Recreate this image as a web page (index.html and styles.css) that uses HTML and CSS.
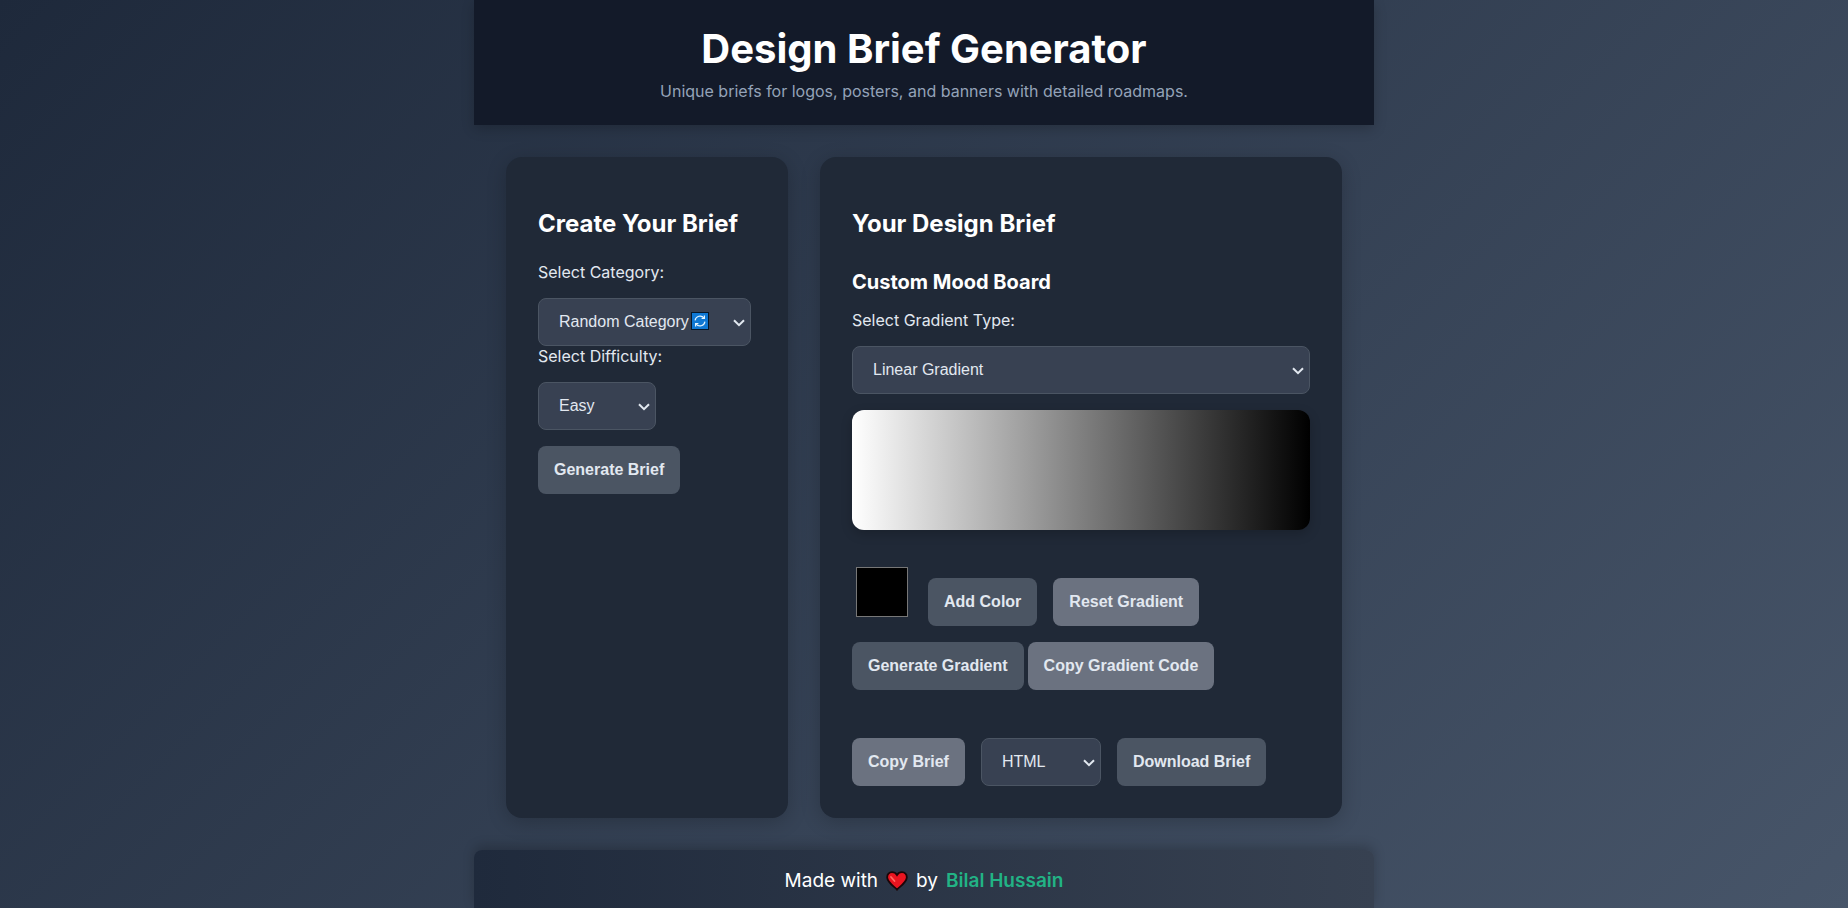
FILE: index.html
```html
<!DOCTYPE html>
<html lang="en">
<head>
<meta charset="utf-8">
<meta name="viewport" content="width=device-width, initial-scale=1">
<title>Design Brief Generator</title>
<link rel="stylesheet" href="styles.css">
</head>
<body>
<div class="container">
  <header class="header">
    <h1>Design Brief Generator</h1>
    <p>Unique briefs for logos, posters, and banners with detailed roadmaps.</p>
  </header>
  <main class="main">
    <section class="card">
      <h2>Create Your Brief</h2>
      <label for="category">Select Category:</label>
      <div class="select-wrap category">
        <select id="category" class="select"><option>Random Category</option></select>
        <svg class="refresh" viewBox="0 0 18 18" aria-hidden="true">
          <rect x="0.5" y="0.5" width="17" height="17" fill="#0f78d4" stroke="#06182a"/>
          <g fill="none" stroke="#e6f6ff" stroke-width="1.2">
            <path d="M4.1 8.4A5 5 0 0 1 13 6M13.9 9.6A5 5 0 0 1 5 12"/>
            <path d="M13.4 3.6V6.4H10.6M4.6 14.4V11.6H7.4"/>
          </g>
        </svg>
        <svg class="chevron" viewBox="0 0 12 8" aria-hidden="true"><path d="M1 1.2L6 6.2L11 1.2"/></svg>
      </div>
      <label for="difficulty">Select Difficulty:</label>
      <div class="select-wrap difficulty">
        <select id="difficulty" class="select"><option>Easy</option><option>Medium</option><option>Hard</option></select>
        <svg class="chevron" viewBox="0 0 12 8" aria-hidden="true"><path d="M1 1.2L6 6.2L11 1.2"/></svg>
      </div>
      <button type="button" class="btn">Generate Brief</button>
    </section>
    <section class="card">
      <h2>Your Design Brief</h2>
      <h3>Custom Mood Board</h3>
      <label for="gradient-type">Select Gradient Type:</label>
      <div class="select-wrap wide">
        <select id="gradient-type" class="select"><option>Linear Gradient</option><option>Radial Gradient</option></select>
        <svg class="chevron" viewBox="0 0 12 8" aria-hidden="true"><path d="M1 1.2L6 6.2L11 1.2"/></svg>
      </div>
      <div class="preview"></div>
      <div class="row colors">
        <input type="color" class="swatch" value="#000000" aria-label="Gradient color">
        <button type="button" class="btn">Add Color</button>
        <button type="button" class="btn light">Reset Gradient</button>
      </div>
      <div class="row tight">
        <button type="button" class="btn">Generate Gradient</button>
        <button type="button" class="btn light">Copy Gradient Code</button>
      </div>
      <div class="row actions">
        <button type="button" class="btn light">Copy Brief</button>
        <div class="select-wrap format">
          <select class="select" aria-label="Download format"><option>HTML</option><option>PDF</option></select>
          <svg class="chevron" viewBox="0 0 12 8" aria-hidden="true"><path d="M1 1.2L6 6.2L11 1.2"/></svg>
        </div>
        <button type="button" class="btn">Download Brief</button>
      </div>
    </section>
  </main>
  <footer class="footer">
    <span>Made with</span>
    <svg class="heart" viewBox="0 0 22 20" role="img" aria-label="love">
      <path d="M11 18.6C9 16 1.5 11.8 1.2 6.6C1 3.2 3.3 1.2 6 1.2C8.4 1.2 10 2.4 11 4C12 2.4 13.6 1.2 16 1.2C18.7 1.2 21 3.2 20.8 6.6C20.5 11.8 13 16 11 18.6Z" fill="#ea1420" stroke="#1b0508" stroke-width="1.8"/>
      <path d="M5 6L8.5 10" stroke="#ff6a62" stroke-width="1.8" stroke-linecap="round"/>
    </svg>
    <span>by</span>
    <a href="#">Bilal Hussain</a>
  </footer>
</div>
</body>
</html>
```
FILE: styles.css
```css
* { box-sizing: border-box; }

body {
  margin: 0;
  min-height: 100vh;
  background: linear-gradient(135deg, #1e293b, #475569);
  color: #e2e8f0;
  font-family: Inter, sans-serif;
  font-size: 16px;
}

.container {
  display: flex;
  flex-direction: column;
  max-width: 900px;
  min-height: 100vh;
  margin: 0 auto;
}

.header {
  padding: 25px 24px 22px;
  background: #131a29;
  box-shadow: 0 4px 12px rgba(0, 0, 0, 0.2);
  text-align: center;
}

h1, h2, h3, p { margin: 0; }
h1, h2, h3 { color: #fff; font-weight: 700; }

h1 {
  margin-bottom: 6px;
  font-size: 40px;
  line-height: 48px;
}

.header p {
  color: #94a3b8;
  line-height: 24px;
}

.main {
  display: grid;
  grid-template-columns: 282fr 522fr;
  gap: 32px;
  padding: 32px;
}

.card {
  display: flex;
  flex-direction: column;
  align-items: flex-start;
  min-width: 0;
  padding: 52px 32px 32px;
  border-radius: 16px;
  background: #202937;
  box-shadow: 0 4px 20px rgba(0, 0, 0, 0.2);
}

h2 {
  margin-bottom: 24px;
  font-size: 24px;
  line-height: 29px;
}

h3 {
  margin: 8px 0 16px;
  font-size: 20px;
  line-height: 24px;
}

label {
  margin-bottom: 16px;
  line-height: 20px;
}

.select, .btn {
  height: 48px;
  border-radius: 8px;
  font-family: "Liberation Sans", Arial, sans-serif;
  font-size: 16px;
}

.select {
  width: 100%;
  padding: 0 20px 2px;
  border: 1px solid #4b5563;
  background: #384152;
  color: #e2e8f0;
  appearance: none;
}

.select-wrap { position: relative; display: flex; }
.category { width: 213px; }
.difficulty { width: 118px; margin-bottom: 16px; }
.format { width: 120px; }
.wide { width: 100%; }

.chevron {
  position: absolute;
  top: 21px;
  right: 6px;
  width: 12px;
  height: 8px;
  fill: none;
  stroke: #e2e8f0;
  stroke-width: 2;
  pointer-events: none;
}

.category .select { padding-right: 0; }

.refresh {
  position: absolute;
  top: 14px;
  left: 153px;
  width: 18px;
  height: 18px;
  pointer-events: none;
}

.btn {
  padding: 0 16px;
  border: 0;
  background: #4b5563;
  color: #e2e8f0;
  font-weight: 700;
}

.btn.light { background: #6b7280; }

.preview {
  width: 100%;
  height: 120px;
  margin: 16px 0 32px;
  border-radius: 12px;
  background: linear-gradient(90deg, #fff, #000);
  box-shadow: 0 4px 12px rgba(0, 0, 0, 0.2);
}

.row {
  display: flex;
  flex-wrap: wrap;
  gap: 16px;
}

.colors { margin-bottom: 16px; }
.colors .btn { margin-top: 16px; }
.row.tight { gap: 4px; margin-bottom: 48px; }

.swatch {
  width: 60px;
  height: 60px;
  padding: 1px 2px;
  border: 0;
  background: none;
}

.footer {
  display: flex;
  flex: 1;
  align-items: center;
  justify-content: center;
  gap: 8px;
  padding: 18px 16px 14px;
  border-radius: 8px 8px 0 0;
  background: linear-gradient(90deg, #1f2a3c, #374151);
  box-shadow: 0 -4px 12px rgba(0, 0, 0, 0.2);
  color: #fff;
  font-size: 19px;
  line-height: 24px;
}

.heart { width: 22px; height: 20px; }

.footer a {
  color: #22b385;
  font-weight: 600;
  text-decoration: none;
}
```
